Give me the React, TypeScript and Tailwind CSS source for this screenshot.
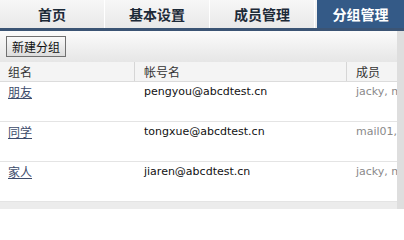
import React from "react";

const tabs = ["首页", "基本设置", "成员管理", "分组管理"];

const groups = [
  { name: "朋友", account: "pengyou@abcdtest.cn", members: "jacky, mail01" },
  { name: "同学", account: "tongxue@abcdtest.cn", members: "mail01, jacky" },
  { name: "家人", account: "jiaren@abcdtest.cn", members: "jacky, mail02" },
];

const cjk = "font-['Noto_Sans_CJK_SC',sans-serif]";
const latin = "font-['DejaVu_Sans','Noto_Sans_CJK_SC',sans-serif]";

export default function App() {
  return (
    <div className="w-[404px] h-[209px] overflow-hidden bg-white flex flex-col">
      {/* Tabs */}
      <div className="flex h-[28px] shrink-0 bg-gradient-to-b from-[#f7f7f7] to-[#e9e9e9]">
        {tabs.map((t, i) => {
          const active = i === tabs.length - 1;
          return (
            <div
              key={t}
              className={
                active
                  ? `flex-1 ml-[2px] flex items-center justify-center bg-[#345a87] text-white font-bold text-[14px] ${cjk}`
                  : `w-[105px] border-r border-white flex items-center justify-center text-[#1d2a38] font-bold text-[14px] ${cjk}`
              }
            >
              {t}
            </div>
          );
        })}
      </div>
      <div className="h-[3px] bg-[#3b5474] shrink-0" />

      <div className="flex flex-1 min-h-0">
        <div className="flex-1 flex flex-col min-w-0">
          {/* Toolbar */}
          <div className="h-[31px] shrink-0 flex items-center px-[6px] bg-gradient-to-b from-[#fbfbfb] to-[#e6e6e6]">
            <button
              className={`h-[21px] px-[5px] border border-[#707070] bg-gradient-to-b from-[#fafafa] to-[#dcdcdc] text-[12px] text-[#111] leading-none ${cjk}`}
            >
              新建分组
            </button>
          </div>

          {/* Header */}
          <div className={`h-[20px] shrink-0 flex items-center bg-[#f4f4f4] border-b border-[#dcdcdc] text-[12px] text-[#333] ${cjk}`}>
            <div className="w-[135px] pl-[8px] border-r border-[#d6d6d6] h-full flex items-center">组名</div>
            <div className="w-[212px] pl-[9px] border-r border-[#d6d6d6] h-full flex items-center">帐号名</div>
            <div className="flex-1 pl-[9px] h-full flex items-center">成员</div>
          </div>

          {/* Rows */}
          {groups.map((g) => (
            <div key={g.name} className="h-[40px] shrink-0 flex items-start pt-[1px] border-b border-[#e4e4e4]">
              <div className={`w-[135px] pl-[8px] text-[12px] ${cjk}`}>
                <a className="text-[#3c4b6b] underline">{g.name}</a>
              </div>
              <div className={`w-[212px] pl-[9px] text-[11px] leading-[18px] text-[#111] ${latin}`}>{g.account}</div>
              <div className={`flex-1 pl-[9px] text-[11px] leading-[18px] text-[#8a8a8a] whitespace-nowrap overflow-hidden ${latin}`}>
                {g.members}
              </div>
            </div>
          ))}
          <div className="flex-1 bg-[#ececec]" />
        </div>
        <div className="w-[7px] bg-[#dedede]" />
      </div>
    </div>
  );
}
